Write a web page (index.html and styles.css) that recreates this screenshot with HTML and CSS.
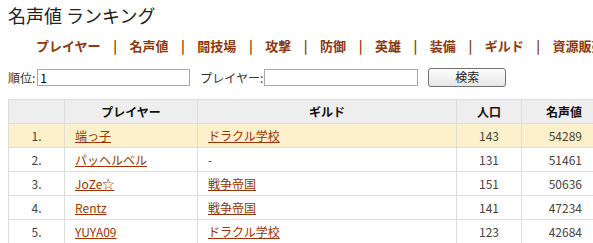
FILE: index.html
```html
<!DOCTYPE html>
<html lang="ja">
<head>
  <meta charset="UTF-8" />
  <title>名声値 ランキング</title>
  <link rel="stylesheet" href="styles.css">
</head>
<body>

  <h1>名声値 ランキング</h1>

  <div class="nav">
    <a href="#">プレイヤー</a><span class="sep">|</span>
    <a href="#">名声値</a><span class="sep">|</span>
    <a href="#">闘技場</a><span class="sep">|</span>
    <a href="#">攻撃</a><span class="sep">|</span>
    <a href="#">防御</a><span class="sep">|</span>
    <a href="#">英雄</a><span class="sep">|</span>
    <a href="#">装備</a><span class="sep">|</span>
    <a href="#">ギルド</a><span class="sep">|</span>
    <a href="#">資源販売</a>
  </div>

  <form class="search">
    <label>順位:</label><input type="text" class="rank-input" value="1">
    <label class="player-label">プレイヤー:</label><input type="text" class="player-input">
    <button type="button">検索</button>
  </form>

  <table class="ranking">
    <colgroup>
      <col class="w-rank">
      <col class="w-player">
      <col class="w-guild">
      <col class="w-pop">
      <col class="w-fame">
    </colgroup>
    <tr>
      <th class="c-rank"></th>
      <th class="c-player">プレイヤー</th>
      <th class="c-guild">ギルド</th>
      <th class="c-pop">人口</th>
      <th class="c-fame">名声値</th>
    </tr>
    <tr class="mine">
      <td class="c-rank">1.</td>
      <td class="c-player"><a href="#">端っ子</a></td>
      <td class="c-guild"><a href="#">ドラクル学校</a></td>
      <td class="c-pop">143</td>
      <td class="c-fame">54289</td>
    </tr>
    <tr>
      <td class="c-rank">2.</td>
      <td class="c-player"><a href="#">パッヘルベル</a></td>
      <td class="c-guild">-</td>
      <td class="c-pop">131</td>
      <td class="c-fame">51461</td>
    </tr>
    <tr>
      <td class="c-rank">3.</td>
      <td class="c-player"><a href="#">JoZe☆</a></td>
      <td class="c-guild"><a href="#">戦争帝国</a></td>
      <td class="c-pop">151</td>
      <td class="c-fame">50636</td>
    </tr>
    <tr>
      <td class="c-rank">4.</td>
      <td class="c-player"><a href="#">Rentz</a></td>
      <td class="c-guild"><a href="#">戦争帝国</a></td>
      <td class="c-pop">141</td>
      <td class="c-fame">47234</td>
    </tr>
    <tr>
      <td class="c-rank">5.</td>
      <td class="c-player"><a href="#">YUYA09</a></td>
      <td class="c-guild"><a href="#">ドラクル学校</a></td>
      <td class="c-pop">123</td>
      <td class="c-fame">42684</td>
    </tr>
  </table>

</body>
</html>
```

FILE: styles.css
```css
html, body {
  overflow: hidden;
}

body {
  margin: 0;
  padding: 0 0 0 8px;
  font-family: "Noto Sans CJK JP", "Liberation Sans", sans-serif;
  font-size: 12px;
  color: #333;
  background: #fff;
}

h1 {
  margin: 0;
  padding-top: 3px;
  font-size: 18px;
  font-weight: normal;
  line-height: 24px;
  color: #222;
}

.nav {
  display: flex;
  margin-top: 10px;
  padding-left: 28px;
  font-size: 13px;
  font-weight: bold;
  line-height: 18px;
  white-space: nowrap;
}

.nav a {
  color: #8b3a0f;
  text-decoration: none;
}

.nav .sep {
  color: #8b3a0f;
  margin: 0 12.5px;
  font-weight: bold;
}

.search {
  display: flex;
  align-items: center;
  margin: 12px 0 0;
  height: 20px;
}

.search label {
  font-size: 12px;
  color: #333;
}

.search input {
  height: 17px;
  box-sizing: border-box;
  border: 1px solid #a9a9a9;
  padding: 0 2px;
  font-family: inherit;
  font-size: 12px;
  margin: 0;
}

.rank-input {
  width: 153px;
  margin-left: 2px !important;
}

.player-label {
  margin-left: 10px;
}

.player-input {
  width: 154px;
  margin-left: 1px !important;
}

.search button {
  margin-left: 10px;
  width: 78px;
  height: 19px;
  border: 1px solid #707070;
  border-radius: 3px;
  background: linear-gradient(#fdfdfd, #e6e6e6);
  font-family: inherit;
  font-size: 12px;
  padding: 0;
  line-height: 16px;
  color: #222;
}

.ranking {
  margin-top: 12px;
  border-collapse: collapse;
  table-layout: fixed;
  width: 586px;
}

.w-rank { width: 56px; }
.w-player { width: 133px; }
.w-guild { width: 259px; }
.w-pop { width: 65px; }
.w-fame { width: 73px; }

.ranking th, .ranking td {
  border: 1px solid #ddd;
  height: 23px;
  padding: 0 10px;
  line-height: 16px;
  white-space: nowrap;
}

.ranking th {
  background: #eee;
  font-weight: bold;
  color: #111;
  font-size: 12px;
}

.ranking td {
  color: #444;
}

.ranking tr.mine td {
  background: #fdf1cc;
}

.ranking a {
  color: #993300;
  text-decoration: underline;
}

.c-rank {
  text-align: center;
}

.c-player, .c-guild {
  text-align: left;
}

.c-pop {
  text-align: center;
}

.c-fame {
  text-align: right;
}

th.c-player, th.c-guild {
  text-align: center;
}

.ranking td.c-fame, .ranking th.c-fame {
  padding-right: 12px;
}
```
